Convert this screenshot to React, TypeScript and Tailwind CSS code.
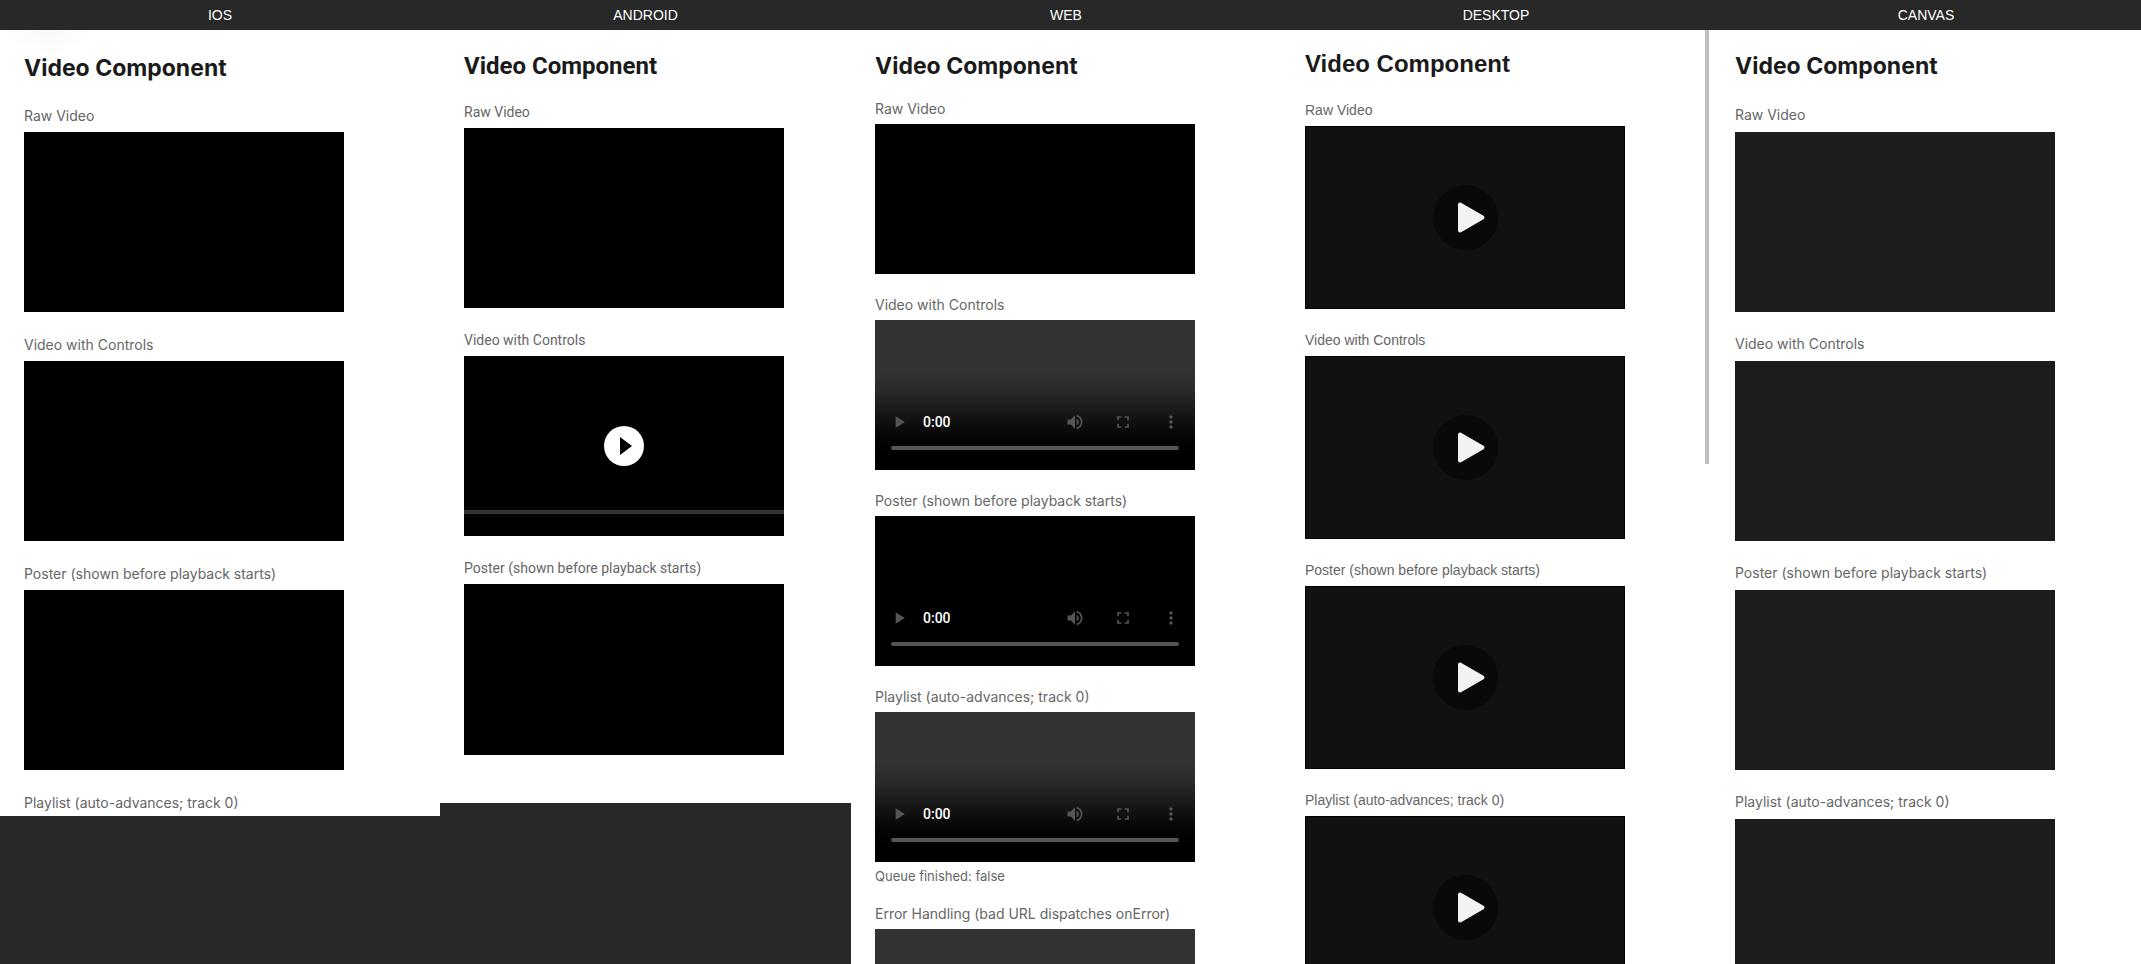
import clsx from 'clsx'
import type { ReactNode } from 'react'

const LABELS = [
    'Raw Video',
    'Video with Controls',
    'Poster (shown before playback starts)',
    'Playlist (auto-advances; track 0)',
]

function Column({ name, children }: { name: string; children: ReactNode }) {
    return (
        <section className="flex min-h-0 min-w-0 flex-col">
            <h2 className="h-[30px] shrink-0 text-center font-['Liberation_Sans',sans-serif] text-sm leading-[30px] text-white">
                {name}
            </h2>
            {children}
        </section>
    )
}

function IconButton({ label, children }: { label: string; children: ReactNode }) {
    return (
        <button type="button" aria-label={label} className="flex size-12 items-center justify-center text-[#555]">
            <svg viewBox="0 0 24 24" className="size-5" fill="currentColor">
                {children}
            </svg>
        </button>
    )
}

function WebPlayer({ black = false }: { black?: boolean }) {
    return (
        <div
            className={clsx(
                'flex h-[150px] w-80 flex-col justify-end pb-5',
                black
                    ? 'bg-black'
                    : 'bg-[linear-gradient(#333_33%,#2b2b2b_46%,#131313_65%,#050505_78%,#000_90%)]'
            )}
        >
            <div className="flex items-center">
                <IconButton label="Play">
                    <path d="M8 5v14l11-7z" />
                </IconButton>
                <span className="flex-1 font-['Roboto',sans-serif] text-sm font-medium text-white">0:00</span>
                <IconButton label="Mute">
                    <path d="M3 9v6h4l5 5V4L7 9H3zm13.5 3c0-1.77-1.02-3.29-2.5-4.03v8.05c1.48-.73 2.5-2.25 2.5-4.02zM14 3.23v2.06c2.89.86 5 3.54 5 6.71s-2.11 5.85-5 6.71v2.06c4.01-.91 7-4.49 7-8.77s-2.99-7.86-7-8.77z" />
                </IconButton>
                <IconButton label="Full screen">
                    <path d="M7 14H5v5h5v-2H7v-3zm-2-4h2V7h3V5H5v5zm12 7h-3v2h5v-5h-2v3zM14 5v2h3v3h2V5h-5z" />
                </IconButton>
                <IconButton label="More options">
                    <path d="M12 8c1.1 0 2-.9 2-2s-.9-2-2-2-2 .9-2 2 .9 2 2 2zm0 2c-1.1 0-2 .9-2 2s.9 2 2 2 2-.9 2-2-.9-2-2-2zm0 6c-1.1 0-2 .9-2 2s.9 2 2 2 2-.9 2-2-.9-2-2-2z" />
                </IconButton>
            </div>
            <input
                type="range"
                aria-label="Seek"
                defaultValue={0}
                className="mx-4 block h-1 appearance-none rounded-full bg-[#555] [&::-webkit-slider-thumb]:size-0 [&::-webkit-slider-thumb]:appearance-none"
            />
        </div>
    )
}

function DesktopPlayer() {
    return (
        <div className="flex h-[183px] w-80 items-center justify-center border border-black bg-[#111]">
            <button type="button" aria-label="Play" className="size-[65px] rounded-full bg-[#090909]">
                <svg viewBox="0 0 65 65" className="size-full">
                    <path
                        d="M27 19.5v26l22.5-13z"
                        fill="#f2f2f2"
                        stroke="#f2f2f2"
                        strokeWidth="4"
                        strokeLinejoin="round"
                    />
                </svg>
            </button>
        </div>
    )
}

function AndroidPlayer() {
    return (
        <div className="relative flex h-[180px] w-80 items-center justify-center bg-black">
            <button type="button" aria-label="Play" className="size-10 rounded-full bg-white">
                <svg viewBox="0 0 40 40" className="size-full">
                    <path d="M16 11v18l12-9z" />
                </svg>
            </button>
            <div className="absolute inset-x-0 bottom-[22px] h-1 bg-[#333]" />
        </div>
    )
}

function IosPane() {
    return (
        <div className="relative aspect-[440/786] min-h-0 overflow-hidden bg-white px-6 pt-6 font-['Inter',sans-serif]">
            <div className="absolute top-0 left-0 h-6 w-24 bg-[radial-gradient(ellipse_at_top,#f8f8f8,#fff_70%)]" />
            <h1 className="relative text-[23px] leading-[29px] font-bold text-[#1a1a1a]">Video Component</h1>
            {LABELS.map((label, i) => (
                <div key={label} className="mt-6">
                    <p className="mb-2 text-sm leading-[17px] text-[#666]">{label}</p>
                    {i < 3 && <div className="h-[180px] w-80 bg-black" />}
                </div>
            ))}
        </div>
    )
}

function AndroidPane() {
    return (
        <div className="flex aspect-[411/773] min-h-0 flex-col bg-white pb-12 font-['Roboto',sans-serif]">
            <div className="min-h-0 flex-1 overflow-hidden px-6 pt-[22px]">
                <h1 className="text-2xl leading-7 font-bold text-[#1a1a1a]">Video Component</h1>
                {LABELS.slice(0, 3).map((label, i) => (
                    <div key={label} className="mt-6">
                        <p className="mb-2 text-sm leading-4 text-[#666]">{label}</p>
                        {i === 1 ? <AndroidPlayer /> : <div className="h-[180px] w-80 bg-black" />}
                    </div>
                ))}
            </div>
        </div>
    )
}

function WebPane() {
    return (
        <div className="min-h-0 flex-1 overflow-hidden bg-white px-6 pt-6 font-['Inter',sans-serif] text-[#666]">
            <h1 className="text-[23px] leading-6 font-bold text-[#1a1a1a]">Video Component</h1>
            {LABELS.map((label, i) => (
                <div key={label} className="mt-6">
                    <p className="mb-2 text-sm leading-[14px]">{label}</p>
                    {i === 0 ? <div className="h-[150px] w-80 bg-black" /> : <WebPlayer black={i === 2} />}
                </div>
            ))}
            <p className="mt-2 text-[13px] leading-[13px]">Queue finished: false</p>
            <div className="mt-6">
                <p className="mb-2 text-sm leading-[14px]">Error Handling (bad URL dispatches onError)</p>
                <div className="h-[150px] w-80 bg-[#333]" />
            </div>
        </div>
    )
}

function DesktopPane() {
    return (
        <div className="relative min-h-0 flex-1 overflow-hidden bg-white px-6 pt-[19px] font-['Liberation_Sans',sans-serif]">
            <h1 className="text-2xl leading-[30px] font-bold text-[#1a1a1a]">Video Component</h1>
            {LABELS.map((label) => (
                <div key={label} className="mt-6">
                    <p className="mb-2 text-sm leading-[15px] text-[#666]">{label}</p>
                    <DesktopPlayer />
                </div>
            ))}
            {/* scrollbar thumb */}
            <div className="absolute top-0 right-0.5 h-[434px] w-1 bg-[#bfbfbf]" />
        </div>
    )
}

function CanvasPane() {
    return (
        <div className="min-h-0 flex-1 overflow-hidden bg-white px-6 pt-6 font-['Inter',sans-serif]">
            <h1 className="mb-[29px] text-[23px] leading-6 font-bold text-[#1a1a1a]">Video Component</h1>
            {LABELS.map((label) => (
                <div key={label} className="mb-6">
                    <p className="mb-2.5 text-sm leading-[15px] text-[#666]">{label}</p>
                    <div className="h-[180px] w-80 bg-[#1c1c1e]" />
                </div>
            ))}
        </div>
    )
}

export default function App() {
    return (
        <main className="grid h-screen grid-cols-[440fr_411fr_430fr_430fr_430fr] grid-rows-[minmax(0,1fr)] overflow-hidden bg-[#282828]">
            <Column name="IOS">
                <IosPane />
            </Column>
            <Column name="ANDROID">
                <AndroidPane />
            </Column>
            <Column name="WEB">
                <WebPane />
            </Column>
            <Column name="DESKTOP">
                <DesktopPane />
            </Column>
            <Column name="CANVAS">
                <CanvasPane />
            </Column>
        </main>
    )
}
